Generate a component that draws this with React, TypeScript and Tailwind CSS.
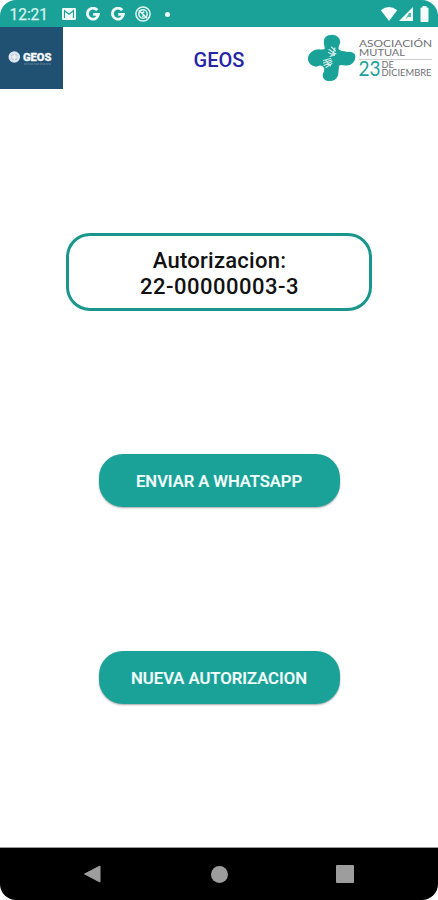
import React from "react";

interface ActionButtonProps {
  label: string;
  textWidth: number;
}

const GoogleIcon: React.FC = () => (
  <svg width="14" height="14" viewBox="0 0 14 14" fill="none">
    <path
      d="M11.2 3.2A5.5 5.5 0 1 0 12.4 7.4H7.2"
      stroke="#effaf8"
      strokeWidth="2.8"
    />
  </svg>
);

const StatusBar: React.FC = () => (
  <div className="flex h-[27px] shrink-0 items-center bg-[#1aa298] pt-px pr-[9px] pl-[9px]">
    <svg width="40" height="18" viewBox="0 0 40 18">
      <text x="0.5" y="14.5" fontSize="16" fill="#d9f3f0" stroke="#d9f3f0" strokeWidth="0.25" textLength="38.5" lengthAdjust="spacingAndGlyphs">
        12:21
      </text>
    </svg>
    <svg className="ml-[13px]" width="14" height="12" viewBox="0 0 14 12">
      <rect width="14" height="12" rx="1.3" fill="#effaf8" />
      <path d="M2.5 10V2.7L7 6.3l4.5-3.6V10" fill="none" stroke="#1aa298" strokeWidth="1.1" />
    </svg>
    <div className="ml-[10px] flex gap-[11px]">
      <GoogleIcon />
      <GoogleIcon />
    </div>
    <svg className="ml-[10px]" width="16" height="16" viewBox="0 0 16 16" fill="none" stroke="#e5f7f5">
      <circle cx="8" cy="8" r="7.1" strokeWidth="1.5" />
      <circle cx="8" cy="8" r="4.2" strokeWidth="1.5" />
      <path d="M3.8 4.2l8.4 8M6.3 7.7l3-2M7 10.4l2-.6" strokeWidth="1.5" />
    </svg>
    <div className="ml-[14px] size-[5px] rounded-full bg-[#effaf8]" />
    <svg className="ml-auto" width="49" height="18" viewBox="0 0 49 18" fill="#f5fcfb">
      <path d="M.8 5.2Q9-1.4 17.2 5.2L9 16z" />
      <path d="M33 2v14H19z" />
      <path d="M29 8h2v4h-3l-2.5 2z" fill="#1aa298" opacity="0.75" />
      <path d="M42.5 1h4v1.6h1q1 0 1 1V16q0 1-1 1h-6q-1 0-1-1V3.6q0-1 1-1h1z" />
    </svg>
  </div>
);

const GeosBadge: React.FC = () => (
  <svg className="h-[62px] w-[63px] bg-[#205072]" viewBox="0 0 63 62">
    <circle cx="14.3" cy="30" r="5.8" fill="#dce5ef" />
    <circle cx="14.3" cy="30" r="2.9" fill="none" stroke="#a3b7ca" strokeWidth="0.7" />
    <path d="M14.3 26v8M10.3 30h8" stroke="#f4f7fa" strokeWidth="0.8" />
    <text x="23" y="33.5" fontSize="10" fontWeight="900" fill="#f3f6f9" stroke="#f3f6f9" strokeWidth="0.3" textLength="28.5" lengthAdjust="spacingAndGlyphs">
      GEOS
    </text>
    <path d="M24 37h27" stroke="#6c889f" strokeWidth="1" strokeDasharray="3 .6 2 .5" />
  </svg>
);

const MutualLogo: React.FC = () => (
  <svg className="ml-auto mr-[5px] h-[62px] w-[126px]" viewBox="0 0 126 62" fontFamily="Lato, sans-serif">
    <path
      d="M24 8.5C29 8 33 11 32.5 15.5C32 18 30.5 20 31 22C32.500 25 36 24.500 40 25.500C44 25 47.800 26 47.800 29.500C47.800 34 44.500 38 40 38C36 38 33.500 36.500 32 38C30.500 40 31.500 44 30.500 48C29 52 26 53.500 22.500 53.500C18.500 53.500 15.500 51 16.500 47C18 44 19 42 17 40C15 37.500 12 37.500 10 39C7 39.500 3 37 2 34C1 31 2.500 27 6 24.500C10 21.500 15 24 18 22.500C19 20.500 17 17.500 17.500 13.500C18 10.500 20.500 8.500 24 8.5Z"
      fill="#1aa298"
      stroke="#1aa298"
      strokeWidth="1.2"
      strokeLinejoin="round"
    />
    <g stroke="#d5eeeb" strokeWidth="1.1" strokeLinecap="round" fill="none">
      <path d="M24.5 20l4 4M22 22.5l6 4M21.5 25.5l6 3M28 21l-3 8M23 29.5l6-3" />
      <path d="M16.5 33.5l7-2M16.5 36l8-3M17 38.5l8-4M19 40.5l6-4M18.5 33l5 6" />
    </g>
    <g fill="#707073">
      <text x="52" y="20" fontSize="9.8" textLength="73" lengthAdjust="spacingAndGlyphs">ASOCIACIÓN</text>
      <text x="52" y="28.5" fontSize="9.8" textLength="46" lengthAdjust="spacingAndGlyphs">MUTUAL</text>
      <text x="74.5" y="41" fontSize="9.5" textLength="12.5" lengthAdjust="spacingAndGlyphs">DE</text>
      <text x="74.5" y="49" fontSize="9.8" textLength="50" lengthAdjust="spacingAndGlyphs">DICIEMBRE</text>
    </g>
    <path d="M52 32.5h73" stroke="#cecece" />
    <text x="51.5" y="49" fontSize="20.5" fill="#1aa298" textLength="22" lengthAdjust="spacingAndGlyphs">23</text>
  </svg>
);

const Header: React.FC = () => (
  <header className="grid h-[62px] shrink-0 grid-cols-3 items-center">
    <GeosBadge />
    <h1 className="pt-[3px] text-center text-[20px] font-medium text-[#2525a5]">GEOS</h1>
    <div className="flex justify-end">
      <MutualLogo />
    </div>
  </header>
);

const ActionButton: React.FC<ActionButtonProps> = ({ label, textWidth }) => (
  <button className="flex h-[53px] w-[241px] items-center justify-center rounded-[24px] bg-[#1aa298] shadow-[0_1px_2px_rgba(0,0,0,0.35)]">
    <svg width={textWidth} height="20" viewBox={`0 0 ${textWidth} 20`}>
      <text x="0" y="16" fontSize="16.5" fontWeight="500" fill="#f4fffd" stroke="#f4fffd" strokeWidth="0.2" textLength={textWidth} lengthAdjust="spacingAndGlyphs">
        {label}
      </text>
    </svg>
  </button>
);

const NavigationBar: React.FC = () => (
  <nav className="flex h-[53px] shrink-0 items-center justify-between border-t border-[#999] bg-black pr-[84px] pl-[83px]">
    <svg width="18" height="18" viewBox="0 0 18 18">
      <path d="M17 1v16L1.5 9z" fill="#9d9d9d" stroke="#9d9d9d" strokeLinejoin="round" />
    </svg>
    <div className="ml-px size-[17px] rounded-full bg-[#9d9d9d]" />
    <div className="size-[18px] rounded-[1px] bg-[#9d9d9d]" />
  </nav>
);

const App: React.FC = () => {
  return (
    <div className="bg-white">
      <div className="flex h-[900px] w-[438px] flex-col overflow-hidden rounded-[16px] bg-white font-['Roboto',sans-serif]">
        <StatusBar />
        <Header />
        <main className="flex flex-1 flex-col items-center pt-[144px]">
          <div className="flex h-[78px] w-[306px] flex-col items-center justify-center rounded-[24px] border-[3px] border-[#1a978c] pt-[4px] pl-px text-center text-[22px] leading-[26px] font-medium text-[#111]">
            <p className="tracking-[0.25px]">Autorizacion:</p>
            <p className="tracking-[0.5px]">22-00000003-3</p>
          </div>
          <div className="mt-[143px] flex flex-col gap-[144px]">
            <ActionButton label="ENVIAR A WHATSAPP" textWidth={166} />
            <ActionButton label="NUEVA AUTORIZACION" textWidth={176} />
          </div>
        </main>
        <NavigationBar />
      </div>
    </div>
  );
};

export default App;
